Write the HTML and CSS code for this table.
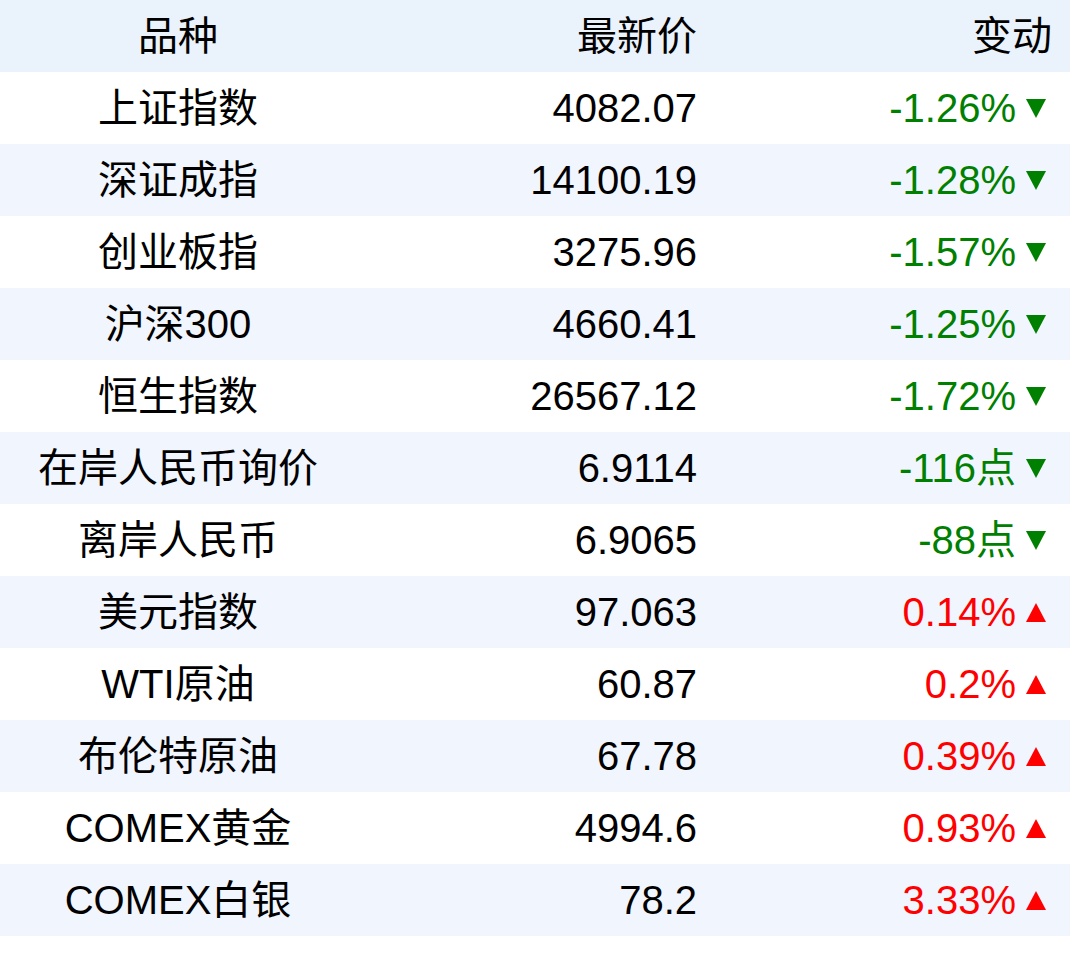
FILE: index.html
```html
<!DOCTYPE html>
<html lang="zh-CN">
<head>
<meta charset="utf-8">
<title>行情</title>
<link rel="stylesheet" href="styles.css">
</head>
<body>
<div class="table">
  <div class="row head">
    <div class="c name">品种</div>
    <div class="c price">最新价</div>
    <div class="c chg-h">变动</div>
  </div>
  <div class="row">
    <div class="c name">上证指数</div><div class="c price">4082.07</div>
    <div class="c chg down"><span>-1.26%</span><svg class="tri" viewBox="0 0 20 19"><path d="M0 0H20L10 19Z"/></svg></div>
  </div>
  <div class="row alt">
    <div class="c name">深证成指</div><div class="c price">14100.19</div>
    <div class="c chg down"><span>-1.28%</span><svg class="tri" viewBox="0 0 20 19"><path d="M0 0H20L10 19Z"/></svg></div>
  </div>
  <div class="row">
    <div class="c name">创业板指</div><div class="c price">3275.96</div>
    <div class="c chg down"><span>-1.57%</span><svg class="tri" viewBox="0 0 20 19"><path d="M0 0H20L10 19Z"/></svg></div>
  </div>
  <div class="row alt">
    <div class="c name">沪深300</div><div class="c price">4660.41</div>
    <div class="c chg down"><span>-1.25%</span><svg class="tri" viewBox="0 0 20 19"><path d="M0 0H20L10 19Z"/></svg></div>
  </div>
  <div class="row">
    <div class="c name">恒生指数</div><div class="c price">26567.12</div>
    <div class="c chg down"><span>-1.72%</span><svg class="tri" viewBox="0 0 20 19"><path d="M0 0H20L10 19Z"/></svg></div>
  </div>
  <div class="row alt">
    <div class="c name">在岸人民币询价</div><div class="c price">6.9114</div>
    <div class="c chg down"><span>-116点</span><svg class="tri" viewBox="0 0 20 19"><path d="M0 0H20L10 19Z"/></svg></div>
  </div>
  <div class="row">
    <div class="c name">离岸人民币</div><div class="c price">6.9065</div>
    <div class="c chg down"><span>-88点</span><svg class="tri" viewBox="0 0 20 19"><path d="M0 0H20L10 19Z"/></svg></div>
  </div>
  <div class="row alt">
    <div class="c name">美元指数</div><div class="c price">97.063</div>
    <div class="c chg up"><span>0.14%</span><svg class="tri" viewBox="0 0 20 19"><path d="M10 0L20 19H0Z"/></svg></div>
  </div>
  <div class="row">
    <div class="c name">WTI原油</div><div class="c price">60.87</div>
    <div class="c chg up"><span>0.2%</span><svg class="tri" viewBox="0 0 20 19"><path d="M10 0L20 19H0Z"/></svg></div>
  </div>
  <div class="row alt">
    <div class="c name">布伦特原油</div><div class="c price">67.78</div>
    <div class="c chg up"><span>0.39%</span><svg class="tri" viewBox="0 0 20 19"><path d="M10 0L20 19H0Z"/></svg></div>
  </div>
  <div class="row">
    <div class="c name">COMEX黄金</div><div class="c price">4994.6</div>
    <div class="c chg up"><span>0.93%</span><svg class="tri" viewBox="0 0 20 19"><path d="M10 0L20 19H0Z"/></svg></div>
  </div>
  <div class="row alt">
    <div class="c name">COMEX白银</div><div class="c price">78.2</div>
    <div class="c chg up"><span>3.33%</span><svg class="tri" viewBox="0 0 20 19"><path d="M10 0L20 19H0Z"/></svg></div>
  </div>
</div>
</body>
</html>
```
FILE: styles.css
```css
html, body {
  margin: 0;
  padding: 0;
  background: #ffffff;
}
body {
  font-family: "Liberation Sans", "Noto Sans CJK SC", sans-serif;
  font-size: 40px;
  color: #000000;
}
.table {
  display: flex;
  flex-direction: column;
  width: 1070px;
}
.row {
  display: grid;
  grid-template-columns: 356px 341px 1fr;
  height: 72px;
  background: #ffffff;
}
.row.head {
  background: #eaf2fb;
}
.row.alt {
  background: #f1f5fd;
}
.c {
  display: flex;
  align-items: center;
  line-height: 1;
  white-space: nowrap;
}
.name {
  justify-content: center;
}
.price {
  justify-content: flex-end;
}
.chg-h {
  justify-content: flex-end;
  padding-right: 18px;
}
.chg {
  justify-content: flex-end;
  padding-right: 24px;
  gap: 10px;
}
.tri {
  width: 20px;
  height: 19px;
  flex: none;
}
.down {
  color: #008000;
}
.down .tri {
  fill: #008000;
}
.up {
  color: #ff0000;
}
.up .tri {
  fill: #ff0000;
}
```
